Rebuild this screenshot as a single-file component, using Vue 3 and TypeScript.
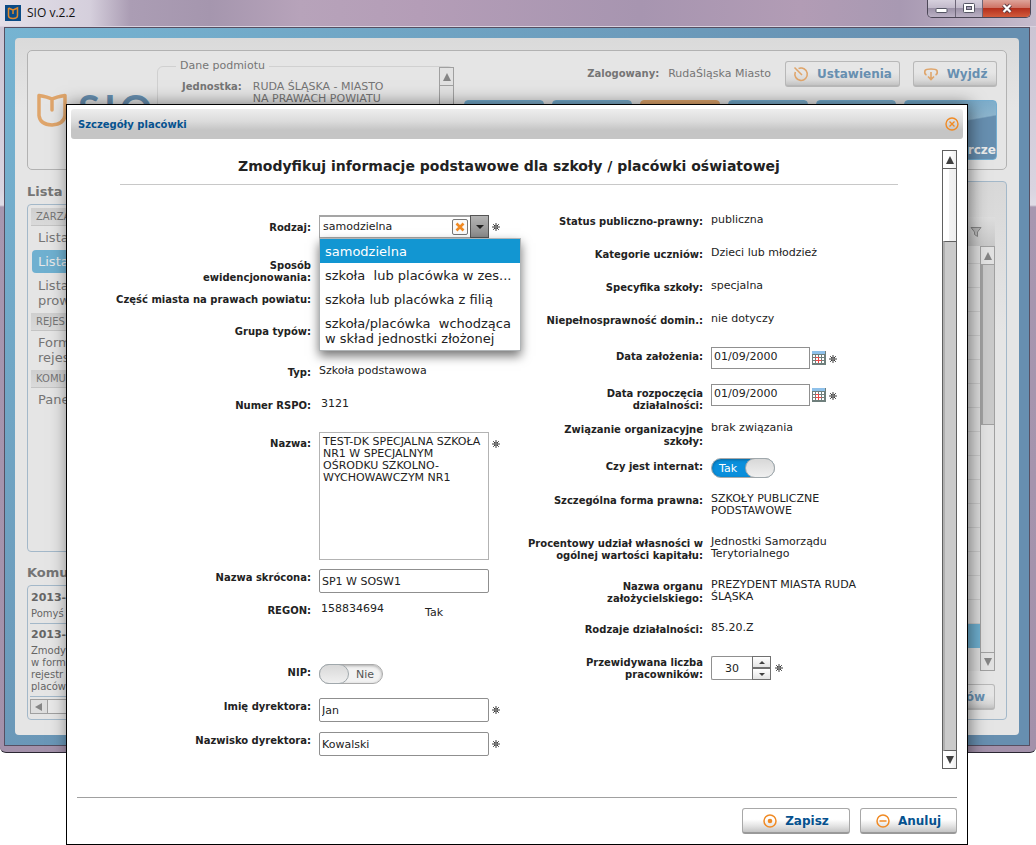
<script setup lang="ts">
import { ref } from 'vue'

interface Row {
  id: string
  label: string
  kind: 'text' | 'combo' | 'area' | 'input' | 'regon' | 'toggle' | 'date' | 'spin' | 'empty'
  size: string
  value?: string
  required?: boolean
}

const left = ref<Row[]>([
  { id: 'rodzaj', label: 'Rodzaj:', kind: 'combo', size: 'h38', required: true },
  { id: 'sposob', label: 'Sposób\newidencjonowania:', kind: 'empty', size: 'h34' },
  { id: 'czesc', label: 'Część miasta na prawach powiatu:', kind: 'empty', size: 'h32' },
  { id: 'grupa', label: 'Grupa typów:', kind: 'empty', size: 'h41' },
  { id: 'typ', label: 'Typ:', kind: 'text', size: 'h33', value: 'Szkoła podstawowa' },
  { id: 'rspo', label: 'Numer RSPO:', kind: 'text', size: 'h38', value: '3121' },
  {
    id: 'nazwa', label: 'Nazwa:', kind: 'area', size: 'h134', required: true,
    value: 'TEST-DK SPECJALNA SZKOŁA\nNR1 W SPECJALNYM\nOŚRODKU SZKOLNO-\nWYCHOWAWCZYM NR1',
  },
  { id: 'skrot', label: 'Nazwa skrócona:', kind: 'input', size: 'h33', value: 'SP1 W SOSW1' },
  { id: 'regon', label: 'REGON:', kind: 'regon', size: 'h62', value: '158834694' },
  { id: 'nip', label: 'NIP:', kind: 'toggle', size: 'h34' },
  { id: 'imie', label: 'Imię dyrektora:', kind: 'input', size: 'h34', value: 'Jan', required: true },
  { id: 'nazwisko', label: 'Nazwisko dyrektora:', kind: 'input', size: 'h41', value: 'Kowalski', required: true },
])

const right = ref<Row[]>([
  { id: 'status', label: 'Status publiczno-prawny:', kind: 'text', size: 'h33', value: 'publiczna' },
  { id: 'kategorie', label: 'Kategorie uczniów:', kind: 'text', size: 'h33', value: 'Dzieci lub młodzież' },
  { id: 'specyfika', label: 'Specyfika szkoły:', kind: 'text', size: 'h33', value: 'specjalna' },
  { id: 'niepel', label: 'Niepełnosprawność domin.:', kind: 'text', size: 'h36', value: 'nie dotyczy' },
  { id: 'zalozenie', label: 'Data założenia:', kind: 'date', size: 'h37', value: '01/09/2000', required: true },
  { id: 'rozpoczecie', label: 'Data rozpoczęcia\ndziałalności:', kind: 'date', size: 'h36', value: '01/09/2000', required: true },
  { id: 'zwiazanie', label: 'Związanie organizacyjne\nszkoły:', kind: 'text', size: 'h37', value: 'brak związania' },
  { id: 'internat', label: 'Czy jest internat:', kind: 'toggle', size: 'h34' },
  { id: 'forma', label: 'Szczególna forma prawna:', kind: 'text', size: 'h43', value: 'SZKOŁY PUBLICZNE\nPODSTAWOWE' },
  { id: 'udzial', label: 'Procentowy udział własności w\nogólnej wartości kapitału:', kind: 'text', size: 'h43', value: 'Jednostki Samorządu\nTerytorialnego' },
  { id: 'organ', label: 'Nazwa organu\nzałożycielskiego:', kind: 'text', size: 'h43', value: 'PREZYDENT MIASTA RUDA\nŚLĄSKA' },
  { id: 'rodzaje', label: 'Rodzaje działalności:', kind: 'text', size: 'h33', value: '85.20.Z' },
  { id: 'liczba', label: 'Przewidywana liczba\npracowników:', kind: 'spin', size: 'h33', value: '30', required: true },
])

const toggles = ref<Record<string, boolean>>({ nip: false, internat: true })
const options = [
  { value: 'samodzielna', text: 'samodzielna' },
  { value: 'zespol', text: 'szkoła  lub placówka w zes...' },
  { value: 'filia', text: 'szkoła lub placówka z filią' },
  { value: 'zlozona', text: 'szkoła/placówka  wchodząca\nw skład jednostki złożonej' },
]
const kind = ref('samodzielna')
const open = ref(true)

function choose(value: string) {
  kind.value = value
  open.value = false
}
function step(row: Row, by: number) {
  row.value = String(Number(row.value) + by)
}

const menu = [
  { head: 'ZARZĄ', items: [{ text: 'Lista' }, { text: 'Lista', active: true }, { text: 'Lista\nprow' }] },
  { head: 'REJES', items: [{ text: 'Form\nrejes' }] },
  { head: 'KOMU', items: [{ text: 'Pane' }] },
]
const tiles = ['', '', 'orange', '', '']
</script>

<template>
  <div class="screen">
    <div class="window">
      <header class="titlebar">
        <svg class="app-icon" viewBox="0 0 16 16" width="16" height="16">
          <rect width="16" height="16" fill="#0a4b86" />
          <path d="M3.500 3v7.500q0 3 4.500 3t4.500-3V3L8 5v4M3.500 3L8 5" fill="none" stroke="#e08a2c" stroke-width="1.500" />
        </svg>
        <span class="app-name">SIO v.2.2</span>
        <div class="win-buttons">
          <button type="button" class="wb min" aria-label="Minimalizuj">
            <svg viewBox="0 0 13 7" width="13" height="7"><rect x="1" y="1.500" width="11" height="4" rx="1" fill="#fff" stroke="#555664" /></svg>
          </button>
          <button type="button" class="wb max" aria-label="Maksymalizuj">
            <svg viewBox="0 0 12 11" width="12" height="11"><rect x=".5" y=".5" width="11" height="9" rx="1" fill="#fff" stroke="#555664" /><rect x="3.500" y="3.500" width="5" height="3" fill="#aaa2b8" stroke="#555664" /></svg>
          </button>
          <button type="button" class="wb close" aria-label="Zamknij okno">
            <svg viewBox="0 0 12 11" width="12" height="11"><path d="M2.500 2l7 7M9.500 2l-7 7" stroke="#5b3a40" stroke-width="4" /><path d="M2.500 2l7 7M9.500 2l-7 7" stroke="#fff" stroke-width="2.200" /></svg>
          </button>
        </div>
      </header>

      <div class="client">
        <div class="page">
          <section class="top">
            <div class="logo">
              <svg viewBox="0 0 32 36" width="32" height="36">
                <path d="M16 18V7Q12 5 3 3.500v20q1 9 13 9.500Q28 32 29 23.500V3.500Q20 5 16 7" fill="none" stroke="#dfa56b" stroke-width="3.500" stroke-linejoin="round" stroke-linecap="round" />
              </svg>
              <span class="logo-text"><span>S</span><span>I</span><span>O</span></span>
            </div>
            <fieldset class="subject">
              <legend>Dane podmiotu</legend>
              <div class="subject-row">
                <b>Jednostka:</b>
                <span>RUDA ŚLĄSKA - MIASTO<br>NA PRAWACH POWIATU</span>
              </div>
              <div class="scroll dim subject-scroll">
                <button type="button" class="sb" aria-label="W górę"><i class="up"></i></button>
                <div class="thumb full"></div>
              </div>
            </fieldset>
            <div class="account">
              <div class="account-row">
                <b>Zalogowany:</b><span class="who">RudaŚląska Miasto</span>
                <button type="button" class="btn dim settings">
                  <svg viewBox="0 0 16 16" width="16" height="16" fill="none" stroke="#dfa56b" stroke-width="1.600"><path d="M5.500 2.600A6.200 6.200 0 1 1 2.300 6M1.500 1.500L9 9M6.500 2h3" /></svg>
                  Ustawienia
                </button>
                <button type="button" class="btn dim leave">
                  <svg viewBox="0 0 16 16" width="16" height="16" fill="none" stroke="#dfa56b" stroke-width="1.600"><path d="M3.500 9Q1 8 2 4.500Q3 3 8 3t6 1.500Q15 8 12.500 9M8 6v8M5 10.500L8 13.500l3-3" /></svg>
                  Wyjdź
                </button>
              </div>
              <nav class="tiles">
                <a v-for="(t, i) in tiles" :key="i" href="#" class="tile" :class="t" aria-label="Moduł"></a>
                <a href="#" class="tile wide">orcze</a>
              </nav>
            </div>
          </section>

          <div class="columns">
            <aside class="side">
              <h2>Lista</h2>
              <nav class="box menu">
                <template v-for="g in menu" :key="g.head">
                  <h3>{{ g.head }}</h3>
                  <a v-for="(it, i) in g.items" :key="i" href="#" :class="{ active: it.active }">{{ it.text }}</a>
                </template>
              </nav>
              <h2 class="second">Komu</h2>
              <div class="box news">
                <article><b>2013-0</b><p>Pomyś</p></article>
                <article><b>2013-0</b><p>Zmody<br>w form<br>rejestr<br>placów</p></article>
                <div class="hscroll"><button type="button" aria-label="W lewo"><i class="lefty"></i></button><div></div></div>
              </div>
            </aside>
            <main class="box list">
              <div class="list-head">
                <svg viewBox="0 0 12 12" width="12" height="12"><path d="M1 1.500h10L7.500 6v4.500l-3-2V6z" fill="#b8b8b8" stroke="#858585" /></svg>
              </div>
              <div class="list-body">
                <div class="lines"><div class="picked"></div></div>
                <div class="scroll dim">
                  <button type="button" class="sb" aria-label="W górę"><i class="up"></i></button>
                  <div class="track"></div>
                  <div class="thumb rest"></div>
                  <button type="button" class="sb" aria-label="W dół"><i class="down"></i></button>
                </div>
              </div>
              <div class="list-foot"><button type="button" class="btn dim">ów</button></div>
            </main>
          </div>
        </div>
      </div>
      <div class="shade"></div>
    </div>

    <section class="dialog" role="dialog" aria-labelledby="dlg-title">
      <header class="dlg-head">
        <h1 id="dlg-title">Szczegóły placówki</h1>
        <button type="button" class="dlg-close" aria-label="Zamknij">
          <svg viewBox="0 0 14 14" width="14" height="14" fill="none" stroke="#f08a24" stroke-width="1.400"><circle cx="7" cy="7" r="6" /><path d="M4.500 4.500l5 5M9.500 4.500l-5 5" /></svg>
        </button>
      </header>

      <div class="dlg-body">
        <form class="content" @submit.prevent>
          <h2 class="form-title">Zmodyfikuj informacje podstawowe dla szkoły / placówki oświatowej</h2>
          <div class="grid">
            <div v-for="(col, c) in [left, right]" :key="c" class="col" :class="c ? 'col-right' : 'col-left'">
              <div v-for="row in col" :key="row.id" class="row" :class="row.size">
                <label class="lbl" :for="row.id">{{ row.label }}</label>
                <div class="val" :class="row.kind">
                  <div v-if="row.kind === 'combo'" class="combo-box">
                    <select :id="row.id" v-model="kind" @mousedown.prevent="open = !open">
                      <option v-for="o in options" :key="o.value" :value="o.value">{{ o.text }}</option>
                    </select>
                    <button type="button" class="clear" aria-label="Wyczyść" @click="kind = ''">
                      <svg viewBox="0 0 10 10" width="10" height="10"><path d="M1.500 1.500l7 7M8.500 1.500l-7 7" stroke="#f08a24" stroke-width="2.600" /></svg>
                    </button>
                    <button type="button" class="drop" aria-label="Rozwiń" @click="open = !open"><i class="down"></i></button>
                    <ul v-if="open" class="popup" role="listbox">
                      <li v-for="o in options" :key="o.value" role="option" :aria-selected="o.value === kind" @click="choose(o.value)">{{ o.text }}</li>
                    </ul>
                  </div>
                  <output v-else-if="row.kind === 'text'" :id="row.id" :class="{ inset: row.id === 'rspo' }">{{ row.value }}</output>
                  <textarea v-else-if="row.kind === 'area'" :id="row.id" v-model="row.value"></textarea>
                  <input v-else-if="row.kind === 'input'" :id="row.id" v-model="row.value" type="text">
                  <template v-else-if="row.kind === 'regon'">
                    <output :id="row.id" class="inset number">{{ row.value }}</output><span class="yes">Tak</span>
                  </template>
                  <div v-else-if="row.kind === 'toggle'" class="switch" :class="{ on: toggles[row.id] }">
                    <input :id="row.id" v-model="toggles[row.id]" type="checkbox">
                    <span class="word">{{ toggles[row.id] ? 'Tak' : 'Nie' }}</span>
                    <span class="knob"></span>
                  </div>
                  <template v-else-if="row.kind === 'date'">
                    <input :id="row.id" v-model="row.value" type="text">
                    <button type="button" class="cal" aria-label="Kalendarz">
                      <svg viewBox="0 0 14 14" width="14" height="14">
                        <rect width="14" height="14" fill="#6f7f7c" />
                        <rect width="13" height="3" fill="#8fc1ea" />
                        <path d="M1 4h2v2H1zM4 4h2v2H4zM7 4h2v2H7zM10 4h2v2h-2zM1 7h2v2H1zM4 7h2v2H4zM7 7h2v2H7zM10 7h2v2h-2zM1 10h2v2H1zM4 10h2v2H4zM7 10h2v2H7zM10 10h2v2h-2z" fill="#fff" />
                        <path d="M3.500 9.500h6M6.500 6v6M3.500 6.500h3" stroke="#f04848" fill="none" />
                      </svg>
                    </button>
                  </template>
                  <div v-else-if="row.kind === 'spin'" class="spinner">
                    <input :id="row.id" v-model="row.value" type="text" inputmode="numeric">
                    <div class="arrows">
                      <button type="button" aria-label="Zwiększ" @click="step(row, 1)"><i class="up"></i></button>
                      <button type="button" aria-label="Zmniejsz" @click="step(row, -1)"><i class="down"></i></button>
                    </div>
                  </div>
                  <svg v-if="row.required" class="req" viewBox="0 0 8 8" width="8" height="8" stroke="#3a3a3a" fill="none"><path d="M4 0v8M0 4h8M1.200 1.200l5.600 5.600M6.800 1.200L1.200 6.800" /><circle cx="4" cy="4" r="1.200" fill="#fff" /></svg>
                </div>
              </div>
            </div>
          </div>
        </form>
        <div class="scroll main-scroll">
          <button type="button" class="sb" aria-label="W górę"><i class="up"></i></button>
          <div class="thumb main-thumb"></div>
          <div class="track rest"></div>
          <button type="button" class="sb" aria-label="W dół"><i class="down"></i></button>
        </div>
      </div>

      <footer class="dlg-foot">
        <button type="button" class="btn save">
          <svg viewBox="0 0 14 14" width="14" height="14" fill="none" stroke="#f08a24" stroke-width="1.500"><circle cx="7" cy="7" r="6" /><circle cx="7" cy="7" r="2.300" fill="#f08a24" stroke="none" /></svg>
          Zapisz
        </button>
        <button type="button" class="btn cancel">
          <svg viewBox="0 0 14 14" width="14" height="14" fill="none" stroke="#f08a24" stroke-width="1.500"><circle cx="7" cy="7" r="6" /><path d="M3.500 7h7" /></svg>
          Anuluj
        </button>
      </footer>
    </section>
  </div>
</template>

<style>
body { background: #fff; }
</style>

<style scoped>
* { box-sizing: border-box; }
.screen {
  position: relative;
  min-height: 845px;
  font: 11px/12px Verdana, "DejaVu Sans", sans-serif;
  color: #222;
}
h1, h2, h3, p, ul { margin: 0; padding: 0; }
ul { list-style: none; }
a { text-decoration: none; }
b { font-size: 10px; }
button { font-family: inherit; margin: 0; padding: 0; }
input, textarea, select { font: inherit; color: inherit; margin: 0; border-radius: 0; }

i { display: block; width: 0; height: 0; border: 4px solid transparent; }
i.up { border-top-width: 0; border-bottom: 8px solid #404040; }
i.down { border-bottom-width: 0; border-top: 8px solid #404040; }
i.lefty { border-left-width: 0; border-right: 7px solid #858585; }

/* application window */
.window {
  position: relative;
  overflow: hidden;
  display: flex;
  flex-direction: column;
  border-bottom: 1px solid #2b2733;
  border-radius: 0 0 6px 6px;
  background: linear-gradient(#c9c2d1 0, #d9d4e0 190px, #e0dce6 205px, #a797b0 207px, #a391aa 100%);
}
.titlebar {
  display: flex;
  align-items: flex-start;
  height: 27px;
  padding-left: 5px;
  background: linear-gradient(90deg, #e2dfe8 0, #d5cfdc 90px, #ab9db4 130px, #a596ae 210px, #b7a3ba 300px, #b49db7 420px, #a795b0 640px, #b29cb5 800px, #a899b2 900px, #c6bccd 1036px);
  border-bottom: 1px solid #d9d2df;
}
.app-icon { margin-top: 5px; }
.app-name { margin: 5px 0 0 6px; font: 12px/16px "Open Sans", "Noto Sans", sans-serif; color: #111; }
.win-buttons {
  display: flex;
  margin: 0 5px 0 auto;
  height: 18px;
  border: 1px solid #4c4757;
  border-top: 0;
  border-radius: 0 0 5px 5px;
  overflow: hidden;
}
.wb { display: flex; align-items: center; justify-content: center; border: 0; background: linear-gradient(#d6d0dd, #c2bacb 45%, #9c92a8 50%, #bab0c4); }
.min { width: 28px; border-right: 1px solid #6d6678; padding-top: 4px; }
.max { width: 27px; border-right: 1px solid #6d6678; }
.wb.close { width: 47px; background: linear-gradient(#dea49a, #cf7466 45%, #b5301d 50%, #d25b3c); }

.client {
  margin: 0 6px 6px 4px;
  border: 1px solid #564f62;
  padding: 10px;
  background: linear-gradient(135deg, #76b4d2, #678fb0 55%);
}
.page {
  padding: 12px 12px 15px;
  border-radius: 4px;
  background: linear-gradient(#dadada, #e5e5e5 70px);
  color: #757575;
}
.top {
  display: flex;
  height: 120px;
  border: 1px solid #b2b2b2;
  border-radius: 5px;
  background: #e5e5e5;
}
.logo { display: flex; width: 129px; padding: 41px 0 0 8px; gap: 10px; }
.logo svg { flex: none; }
.logo-text { display: flex; gap: 4px; font: 40px/34px Lato, sans-serif; font-weight: 700; color: #678fb0; }
.subject {
  position: relative;
  width: 297px;
  height: 100px;
  margin: 8px 0 0;
  padding: 0 0 0 24px;
  border: 1px solid #d0d0d0;
  border-radius: 6px;
  min-width: 0;
}
legend { padding: 0 4px; margin-left: -6px; font-size: 11px; line-height: 14px; }
.subject-row { display: flex; gap: 11px; padding-top: 8px; }
.subject-row b { line-height: 12px; }
.subject-scroll { position: absolute; right: -1px; top: -6px; bottom: 0; }
.account { flex: 1; padding-right: 9px; }
.account-row { display: flex; justify-content: flex-end; align-items: center; margin-top: 10px; height: 26px; }
.who { margin: 0 14px 0 9px; }
.tiles { display: flex; justify-content: flex-end; gap: 8px; margin-top: 13px; }
.tile {
  width: 80px;
  height: 60px;
  border-radius: 4px;
  border: 1px solid #74add0;
  background: linear-gradient(170deg, #6fa6c8, #8cb4cd 40%, #678fb0 42%);
}
.tile.orange { border-color: #dfa56b; background: #dfa56b; }
.tile.wide { width: 93px; padding: 42px 0 0; text-align: right; font-weight: 700; font-size: 12px; line-height: 14px; color: #ececec; }

.btn {
  display: flex;
  align-items: center;
  justify-content: center;
  gap: 8px;
  height: 26px;
  border: 1px solid #a8a8a8;
  border-bottom: 2px solid #999;
  border-radius: 3px;
  background: linear-gradient(#fff 45%, #e2e2e2 75%, #c4c4c4);
  color: #05528f;
  font-size: 12px;
  line-height: 14px;
  font-weight: 700;
}
.btn.dim { border-color: #b8b8b8; background: linear-gradient(#e6e6e6 45%, #d8d8d8 80%, #c4c4c4); color: #678fb0; }
.settings { width: 115px; margin-right: 13px; }
.leave { width: 84px; }

.columns { display: grid; grid-template-columns: 240px 1fr; gap: 12px; margin-top: 11px; }
.box { border: 1px solid #a3b8c9; border-radius: 4px; }
.side h2 { height: 23px; padding-top: 3px; font-size: 13px; line-height: 15px; }
.side h2.second { height: 33px; padding-top: 13px; }
.menu { height: 348px; padding: 3px; }
.menu h3 {
  height: 18px;
  padding-left: 5px;
  border-bottom: 1px solid #c4c4c4;
  background: linear-gradient(#cfcfcf, #dadada);
  font-size: 10px;
  line-height: 18px;
  font-weight: 400;
}
.menu a { display: block; margin: 0 0 1px 1px; padding: 4px 6px; border-radius: 4px; color: #757575; font-size: 13px; line-height: 15px; white-space: pre-line; }
.menu a.active { background: #6fb0d0; color: #e8e8e8; }
.news { height: 135px; padding: 4px 2px 0; color: #666; }
.news article { padding: 1px 1px 3px; border-bottom: 1px solid #a3b8c9; }
.news article + article { padding-top: 4px; }
.news b { display: block; padding: 1px 0 4px; font-size: 11px; }
.news p { font-size: 10px; line-height: 12px; }
.hscroll { display: flex; margin-top: 2px; height: 15px; border: 1px solid #a0a0a0; background: #e8e8e8; }
.hscroll button { width: 17px; border: 0; border-right: 1px solid #a0a0a0; background: #dedede; padding-left: 4px; }

.list { display: flex; flex-direction: column; height: 539px; padding: 35px 11px 0; background: linear-gradient(#d8d8d8, #e5e5e5 150px); }
.list-head { display: flex; justify-content: flex-end; align-items: center; height: 29px; padding-right: 13px; background: linear-gradient(#dedede, #c8c8c8); }
.list-body { display: flex; height: 425px; }
.lines { flex: 1; padding-top: 378px; background: repeating-linear-gradient(#dedede 0 17px, #cbcbcb 17px 18px, #dedede 18px 24px); }
.picked { height: 24px; background: #6fb0d0; }
.list-foot { display: flex; justify-content: flex-end; padding-top: 13px; }
.list-foot .btn { width: 110px; padding-right: 9px; justify-content: flex-end; }

.shade { position: absolute; inset: 104px 68px -92px 66px; box-shadow: 2px 0 16px rgba(0, 0, 0, .5); }

/* scrollbars */
.scroll { display: flex; flex-direction: column; flex: none; width: 15px; border: 1px solid #606060; }
.sb { display: flex; align-items: center; justify-content: center; flex: none; height: 17px; border: 0; background: linear-gradient(90deg, #fff 50%, #eee); }
.track { background: #cacaca; border-left: 2px solid #b0b0b0; height: 161px; border-top: 1px solid #606060; border-bottom: 1px solid #606060; }
.thumb { background: linear-gradient(90deg, #fff 45%, #f2f2f2 50%, #eee); border-top: 1px solid #606060; }
.track.rest, .rest { flex: 1; height: auto; }
.full { flex: 1; }
.thumb.rest { border-bottom: 1px solid #909090; border-top: 0; }
.main-thumb { height: 73px; }
.dim { border-color: #a0a0a0; }
.scroll.dim .sb, .scroll.dim .thumb { background: #e2e2e2; border-color: #a0a0a0; }
.scroll.dim .track { border-color: #a0a0a0; }
.dim i.up { border-bottom-color: #858585; }
.dim i.down { border-top-color: #858585; }

/* dialog */
.dialog {
  position: absolute;
  inset: 104px 68px auto 66px;
  border: 1px solid #000;
  background: #fff;
  padding: 4px;
}
.dlg-head {
  display: flex;
  align-items: center;
  justify-content: space-between;
  height: 30px;
  padding: 0 4px 0 7px;
  border-radius: 3px;
  background: linear-gradient(#eee, #dcdcdc 40%, #c5c5c5 70%, #c5c5c5);
}
.dlg-head h1 { font-size: 10px; line-height: 12px; padding-top: 1px; color: #05528f; }
.dlg-close { border: 0; background: none; height: 14px; }
.dlg-body { display: flex; padding: 11px 6px 0; }
.content { flex: 1; min-width: 0; padding-right: 1px; }
.form-title {
  margin: 0 43px;
  padding: 7px 0 9px;
  border-bottom: 1px solid #c8c8c8;
  text-align: center;
  font-size: 14px;
  line-height: 18px;
  white-space: nowrap;
}
.grid { display: grid; grid-template-columns: 1fr 1fr; padding-top: 24px; }
.col-left { padding-top: 6px; }
.row { display: flex; gap: 8px; }
.h32 { height: 32px; } .h33 { height: 33px; } .h34 { height: 34px; } .h36 { height: 36px; } .h37 { height: 37px; }
.h38 { height: 38px; } .h41 { height: 41px; } .h43 { height: 43px; }
.h62 { height: 62px; } .h134 { height: 134px; }
.lbl { flex: none; padding-top: 7px; text-align: right; font-size: 10px; font-weight: 700; white-space: pre; }
.col-left .lbl { width: 234px; }
.col-right .lbl { width: 194px; }
.val { display: flex; align-items: flex-start; }
.val.text, .val.regon { padding-top: 5px; }
.val output { white-space: pre; }
.inset { padding-left: 2px; }
.number { width: 106px; }
.yes { padding-top: 4px; }
.val.input { padding-top: 4px; }
.val.input input { width: 170px; height: 24px; padding: 0 2px; border: 1px solid #8f8f8f; border-radius: 2px; }
.val.area { padding-top: 1px; }
textarea { width: 170px; height: 128px; padding: 3px; border: 1px solid #b3b3b3; resize: none; overflow: hidden; display: block; white-space: pre; }
.req { flex: none; margin: 8px 0 0 3px; }
.val.date { padding-top: 3px; }
.val.date input { width: 99px; height: 22px; padding: 0 2px 3px; border: 1px solid #909090; }
.cal { margin: 4px 0 0 2px; height: 14px; border: 0; background: none; }

.combo-box { position: relative; width: 170px; }
.combo-box select { appearance: none; display: block; width: 170px; height: 23px; padding: 0 40px 0 3px; border: 1px solid #a5a5a5; border-top-width: 2px; background: #fff; }
.clear { position: absolute; right: 21px; top: 4px; width: 16px; height: 16px; display: flex; align-items: center; justify-content: center; border: 1px solid #777; border-radius: 2px; background: #fafafa; }
.drop { position: absolute; right: 0; top: 0; width: 19px; height: 23px; display: flex; align-items: center; justify-content: center; border: 1px solid #555; background: linear-gradient(#b4b4b4, #8a8a8a); }
.drop i.down { border-top-width: 4px; border-top-color: #222; }
.popup {
  position: absolute;
  z-index: 2;
  top: 23px;
  left: 0;
  width: 202px;
  border: 1px solid #b0b4b6;
  background: #fff;
  box-shadow: 0 5px 10px rgba(0, 0, 0, .55);
}
.popup li { padding: 5px 5px 4px; font-size: 13px; line-height: 15px; white-space: pre; cursor: pointer; }
.popup li[aria-selected="true"] { background: #1296d2; color: #fff; }

.val.toggle { padding-top: 4px; }
.switch { position: relative; width: 64px; height: 20px; border: 1px solid #aaa; border-radius: 10px; background: #f2f2f2; box-shadow: inset 0 1px 3px rgba(0, 0, 0, .3); color: #555; }
.switch input { position: absolute; inset: 0; width: 100%; height: 100%; opacity: 0; z-index: 1; cursor: pointer; }
.switch .word { position: absolute; top: 4px; right: 8px; }
.switch .knob { position: absolute; top: -1px; left: -1px; width: 30px; height: 20px; border: 1px solid #a0a8ac; border-radius: 10px; background: linear-gradient(#d8d8d8, #f0f0f0); }
.switch.on { background: #0a8fdc; color: #fff; }
.switch.on .word { right: auto; left: 7px; }
.switch.on .knob { left: auto; right: -1px; }

.spinner { display: flex; margin-top: 6px; }
.spinner input { width: 41px; height: 24px; padding: 0; text-align: center; border: 1px solid #909090; border-right: 0; border-radius: 2px 0 0 2px; }
.arrows { display: flex; flex-direction: column; }
.arrows button { display: flex; align-items: center; justify-content: center; width: 19px; height: 12px; border: 1px solid #707070; background: linear-gradient(#fff, #e4e4e4); }
.arrows i { border-width: 3px; }
.arrows i.up { border-top-width: 0; border-bottom-width: 3px; }
.arrows i.down { border-bottom-width: 0; border-top-width: 3px; }
.val.spin .req { margin: 14px 0 0 4px; }

.dlg-foot {
  display: flex;
  justify-content: flex-end;
  gap: 10px;
  margin: 28px 6px 0;
  padding: 10px 0 6px;
  border-top: 1px solid #a0a0a0;
}
.save { width: 108px; }
.cancel { width: 97px; }
</style>
